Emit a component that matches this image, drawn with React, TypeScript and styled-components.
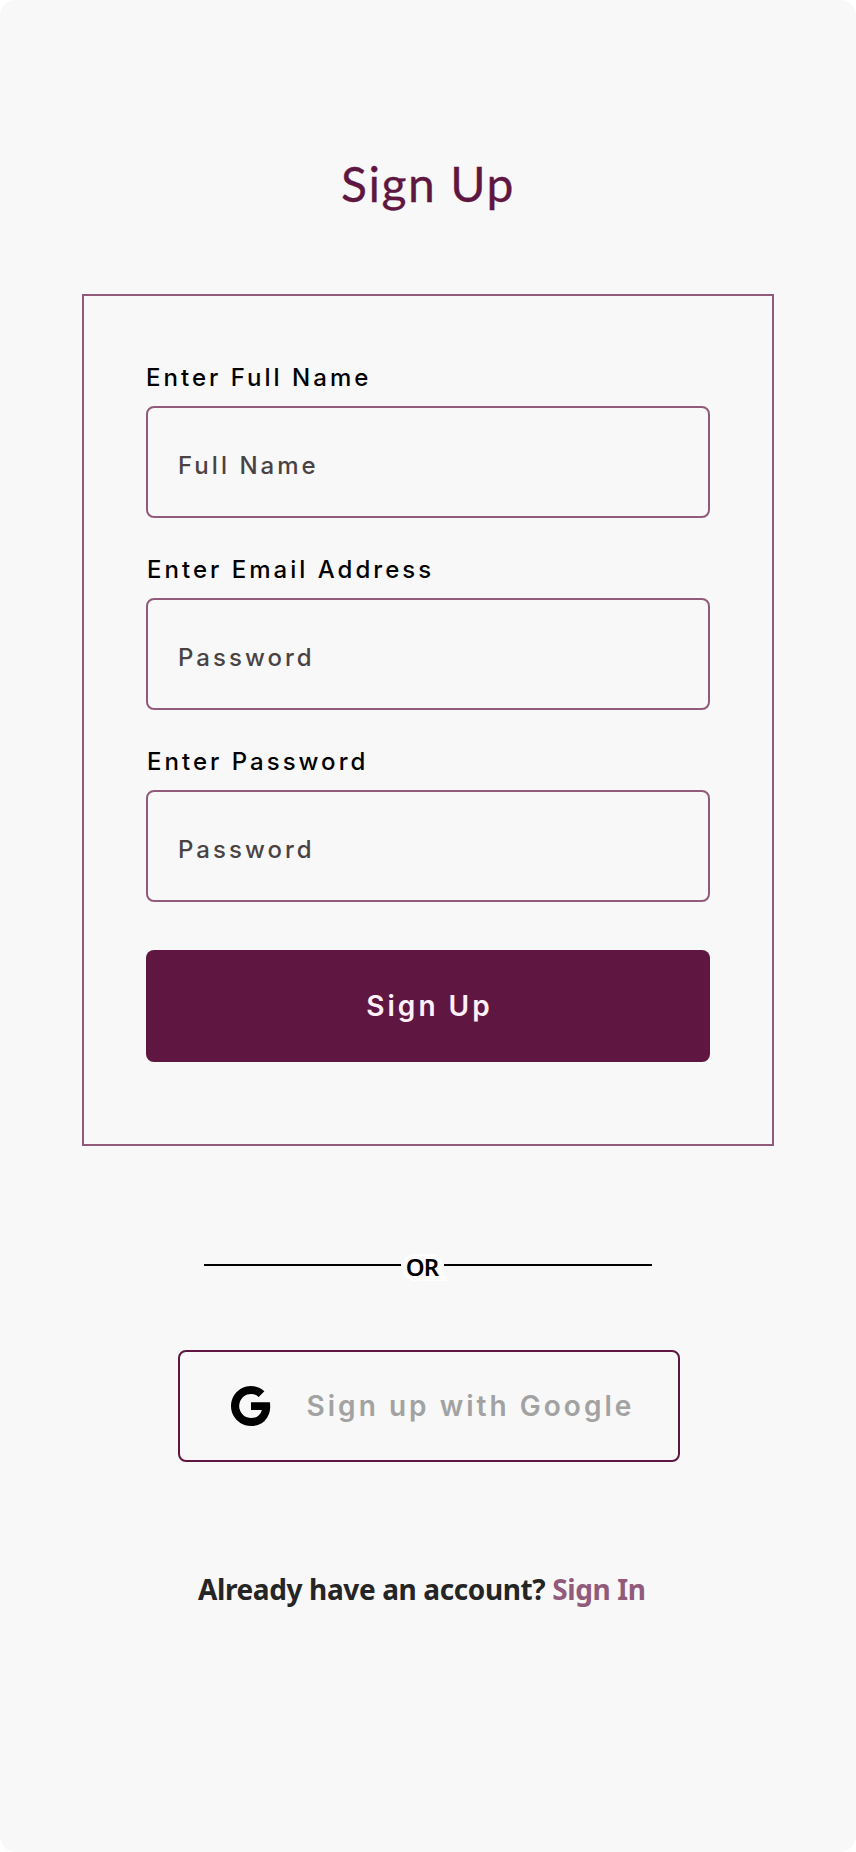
import React from "react";
import styled, { createGlobalStyle } from "styled-components";
import { RiGoogleFill } from "react-icons/ri";

const GlobalStyle = createGlobalStyle`
  *, *::before, *::after { box-sizing: border-box; }
  body { margin: 0; background: #fff; }
`;

const Screen = styled.main`
  display: flex;
  flex-direction: column;
  align-items: center;
  width: 856px;
  height: 1852px;
  padding-top: 154px;
  background: #f8f8f8;
  border-radius: 16px;
  font-family: Inter, sans-serif;
`;

const Title = styled.h1`
  margin: 0 0 80px;
  height: 60px;
  font: 400 48px/60px Lato, sans-serif;
  letter-spacing: 1.6px;
  white-space: nowrap;
  color: #5f1742;
  -webkit-text-stroke: 0.3px #5f1742;
`;

const Card = styled.form`
  width: 692px;
  height: 852px;
  padding: 66px 62px 0;
  border: 2px solid #925a7b;
`;

const Field = styled.label`
  display: flex;
  flex-direction: column;
  height: 192px;
`;

const FieldName = styled.span<{ $indent: number }>`
  height: 44px;
  padding-left: ${(p) => p.$indent}px;
  font-size: 24px;
  line-height: 32px;
  font-weight: 480;
  letter-spacing: 3.02px;
  white-space: nowrap;
  color: #000;
`;

const Input = styled.input`
  width: 564px;
  height: 112px;
  padding: 6px 30px 0;
  border: 2px solid #925a7b;
  border-radius: 8px;
  background: transparent;
  font: 460 24px Inter, sans-serif;
  letter-spacing: 3.03px;
  color: #4a4344;
  &::placeholder { color: #4a4344; opacity: 1; }
`;

const SubmitButton = styled.button`
  display: block;
  width: 564px;
  height: 112px;
  margin-top: 12px;
  padding: 0 0 0 3px;
  border: 0;
  border-radius: 8px;
  background: #5f1742;
  color: #fff0fa;
  font: 600 28px Inter, sans-serif;
  letter-spacing: 3px;
`;

const Divider = styled.div`
  display: flex;
  align-items: center;
  width: 448px;
  height: 34px;
  margin-top: 102px;
`;

const Rule = styled.span<{ $width: number }>`
  flex: 0 0 ${(p) => p.$width}px;
  height: 2px;
  background: #000;
`;

const Or = styled.span`
  flex: 1;
  padding: 3px 1px 0 0;
  text-align: center;
  font: 600 24px/34px "Noto Sans", sans-serif;
  letter-spacing: -0.8px;
  color: #000;
  -webkit-text-stroke: 10px #fffdfd;
  paint-order: stroke fill;
  stroke-linejoin: round;
`;

const GoogleButton = styled.button`
  display: flex;
  align-items: center;
  width: 502px;
  height: 112px;
  margin: 68px 0 0 2px;
  padding: 0 0 0 47px;
  border: 2px solid #5f1742;
  border-radius: 8px;
  background: transparent;
  gap: 31.5px;
  font: 600 28px Inter, sans-serif;
  letter-spacing: 3.03px;
  white-space: nowrap;
  color: #a2a2a2;
  svg { color: #000; flex: none; }
`;

const Footer = styled.p`
  width: 460px;
  margin: 107px 0 0 0;
  font: 700 28px/40px "Noto Sans", sans-serif;
  letter-spacing: -0.38px;
  white-space: nowrap;
  color: #252525;
`;

const SignIn = styled.a`
  color: #925a7b;
`;

const fields = [
  { name: "Enter Full Name", hint: "Full Name", type: "text", indent: 0 },
  { name: "Enter Email Address", hint: "Password", type: "email", indent: 1 },
  { name: "Enter Password", hint: "Password", type: "password", indent: 1 },
];

export default function App() {
  return (
    <>
      <GlobalStyle />
      <Screen>
        <Title>Sign Up</Title>
        <Card>
          {fields.map((f) => (
            <Field key={f.name}>
              <FieldName $indent={f.indent}>{f.name}</FieldName>
              <Input type={f.type} placeholder={f.hint} />
            </Field>
          ))}
          <SubmitButton type="button">Sign Up</SubmitButton>
        </Card>
        <Divider>
          <Rule $width={197} />
          <Or>OR</Or>
          <Rule $width={208} />
        </Divider>
        <GoogleButton type="button">
          <RiGoogleFill size={48} />
          <span>Sign up with Google</span>
        </GoogleButton>
        <Footer>
          Already have an account? <SignIn>Sign In</SignIn>
        </Footer>
      </Screen>
    </>
  );
}
